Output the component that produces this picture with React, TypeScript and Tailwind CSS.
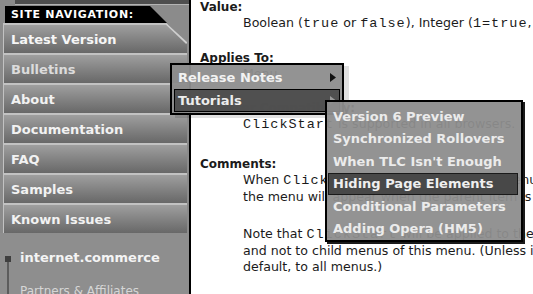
import React from "react";

const navItems = [
  "Latest Version",
  "Bulletins",
  "About",
  "Documentation",
  "FAQ",
  "Samples",
  "Known Issues",
];

const subItems = [
  "Version 6 Preview",
  "Synchronized Rollovers",
  "When TLC Isn't Enough",
  "Hiding Page Elements",
  "Conditional Parameters",
  "Adding Opera (HM5)",
];

function Mono({ children }: { children: React.ReactNode }) {
  return <span className="font-['Liberation_Mono',monospace] text-[13.5px] tracking-[1px]">{children}</span>;
}

function Sidebar() {
  return (
    <aside className="w-[191px] shrink-0 h-full bg-[#8b8b8b] border-r-2 border-black flex flex-col font-['DejaVu_Sans',sans-serif]">
      <div className="h-[6px] pl-[15px]">
        <div className="h-[5px] bg-[#4e4e4e] border-b border-[#b4b4b4]" />
      </div>
      <div className="h-[18px] pt-[1px]">
        <div className="h-[17px] ml-[5px] w-[162px] bg-black [clip-path:polygon(0_0,145px_0,100%_100%,0_100%)] flex items-center pl-[6px] text-[11px] font-bold tracking-[0.7px] text-white leading-none">
          SITE NAVIGATION:
        </div>
      </div>
      {navItems.map((label, i) => (
        <div
          key={label}
          className={
            "relative ml-[3px] w-[184px] h-[30px] shrink-0 border-t-2 border-l border-[#c2c2c2] bg-gradient-to-b from-[#9f9f9f] to-[#686868] flex items-center pl-[7px] text-[13px] font-bold leading-none " +
            (i === 0
              ? "[clip-path:polygon(0_0,163px_0,100%_19px,100%_100%,0_100%)] text-[#f6f6f6]"
              : i === 1
              ? "text-[#dcdcdc]"
              : "text-[#f2f2f2]")
          }
        >
          {label}
          {i === 0 && (
            <svg className="absolute right-0 top-[-2px]" width="21" height="21" viewBox="0 0 21 21">
              <line x1="0" y1="0" x2="21" y2="20" stroke="#cfcfcf" strokeWidth="2.5" />
            </svg>
          )}
        </div>
      ))}
      <div className="flex flex-1 pl-[5px] pt-[17px] bg-[#8e8e8e]">
        <div className="flex flex-col items-center w-[6px] pt-[6px]">
          <div className="w-[6px] h-[6px] bg-[#3f3f3f]" />
          <div className="w-[2px] flex-1 bg-[#5c5c5c]" />
        </div>
        <div className="pl-[9px]">
          <div className="text-[13px] font-bold text-[#f4f4f4] leading-[16px]">internet.commerce</div>
          <div className="mt-[17px] text-[12px] text-[#d6d6d6] leading-[16px]">Partners &amp; Affiliates</div>
        </div>
      </div>
    </aside>
  );
}

function Main() {
  return (
    <main className="flex-1 pl-[9px] text-[#1b1b1b] text-[12.6px] whitespace-nowrap font-['DejaVu_Sans',sans-serif]">
      <h3 className="font-bold text-[12px] leading-[13px] pt-[1px]">Value:</h3>
      <p className="mt-[1px] pl-[43px] leading-[16px]">
        Boolean (<Mono>true</Mono> or <Mono>false</Mono>), Integer (<Mono>1=true</Mono>, <Mono>0=false</Mono>)
      </p>
      <h3 className="mt-[18px] font-bold text-[12px] leading-[16px]">Applies To:</h3>
      <p className="pl-[43px] leading-[16px]">Menu</p>
      <h3 className="mt-[18px] font-bold text-[12px] leading-[16px]">Browser Compatibility:</h3>
      <p className="pl-[43px] leading-[16px]">
        <Mono>ClickStart</Mono> is supported in all browsers.
      </p>
      <h3 className="mt-[23px] font-bold text-[12px] leading-[16px]">Comments:</h3>
      <p className="pl-[43px] leading-[16px]">
        When <Mono>ClickStart</Mono> is set to <Mono>true</Mono>, the menu
        <br />
        the menu will appear when the parent item is clicked, not on rollover.
      </p>
      <p className="mt-[21px] pl-[43px] leading-[16px]">
        Note that <Mono>ClickStart</Mono> will be applied to the menu
        <br />
        and not to child menus of this menu. (Unless it is applied by
        <br />
        default, to all menus.)
      </p>
    </main>
  );
}

function Arrow({ color }: { color: string }) {
  return (
    <svg width="6" height="9" viewBox="0 0 6 9" className="shrink-0">
      <polygon points="0,0 6,4.5 0,9" fill={color} />
    </svg>
  );
}

function Menus() {
  return (
    <>
      <div className="absolute left-[170px] top-[63px] w-[174px] border-2 border-black bg-[#8d8d8d]/95 px-[2px] py-[1px] shadow-[5px_3px_0_rgba(0,0,0,0.12)] font-['DejaVu_Sans',sans-serif] text-[13px] font-bold leading-none">
        <div className="h-[23px] flex items-center justify-between pl-[4px] pr-[4px] text-[#f2f2f2]">
          <span>Release Notes</span>
          <Arrow color="#111" />
        </div>
        <div className="h-[23px] flex items-center justify-between pl-[3px] pr-[3px] bg-[#4c4c4c]/95 border border-black text-[#ececec]">
          <span>Tutorials</span>
          <Arrow color="#9a9a9a" />
        </div>
      </div>
      <div className="absolute left-[325px] top-[100px] w-[198px] border-2 border-black bg-[#8d8d8d]/95 pt-[3px] shadow-[2px_2px_0_#1a1a1a] font-['DejaVu_Sans',sans-serif] text-[13px] font-bold leading-none">
        {subItems.map((s) => (
          <div
            key={s}
            className={
              "h-[22.5px] flex items-center " +
              (s === "Hiding Page Elements"
                ? "ml-[1px] mr-[3px] pl-[4px] bg-[#484848] border border-[#1a1a1a] text-[#efefef]"
                : "pl-[6px] text-[#ebebeb]")
            }
          >
            {s}
          </div>
        ))}
      </div>
    </>
  );
}

export default function App() {
  return (
    <div className="relative flex w-[533px] h-[294px] overflow-hidden bg-white">
      <Sidebar />
      <Main />
      <Menus />
    </div>
  );
}
